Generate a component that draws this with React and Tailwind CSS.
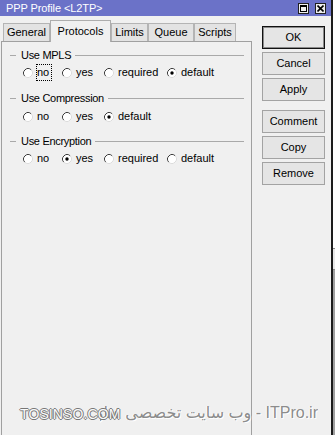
import React from 'react';

const Radio = ({ checked }) => (
  <svg width="10" height="10" viewBox="0 0 10 10" className="shrink-0">
    <circle cx="5" cy="5" r="4.5" fill="#fff" />
    <path d="M8.18 1.82 A4.5 4.5 0 0 0 1.82 8.18" fill="none" stroke="#3c3c3c" strokeWidth="1" />
    <path d="M8.18 1.82 A4.5 4.5 0 0 1 1.82 8.18" fill="none" stroke="#dcdcdc" strokeWidth="1" />
    {checked && <circle cx="5" cy="5" r="1.7" fill="#000" />}
  </svg>
);

const widths = { no: 'w-[39px]', yes: 'w-[42px]', required: 'w-[63px]', default: '' };

function RadioRow({ options, value, focus, className }) {
  return (
    <div className={`flex items-center h-[17px] pl-[21px] ${className}`}>
      {options.map((opt) => (
        <div key={opt} className={`flex items-center ${widths[opt]}`}>
          <Radio checked={opt === value} />
          <span
            className={`ml-[3px] pr-[2px] h-[17px] leading-[15px] border ${
              focus === opt ? 'border-dotted border-black' : 'border-transparent'
            }`}
          >
            {opt}
          </span>
        </div>
      ))}
    </div>
  );
}

function GroupHeader({ label, className }) {
  return (
    <div className={`flex items-center h-[14px] pl-[8px] pr-[7px] ${className}`}>
      <div className="w-[6px] border-t border-[#a9a9a9]" />
      <span className="ml-[5px] mr-[4px] whitespace-nowrap tracking-[-0.3px]">{label}</span>
      <div className="flex-1 border-t border-[#a9a9a9]" />
    </div>
  );
}

const tabs = [
  { label: 'General', w: 'w-[47px]' },
  { label: 'Protocols', w: 'w-[61px]', active: true },
  { label: 'Limits', w: 'w-[37px]' },
  { label: 'Queue', w: 'w-[46px]' },
  { label: 'Scripts', w: 'w-[42px]' },
];

function Btn({ children, primary, className = '' }) {
  return (
    <div
      className={`h-[23px] w-[63px] flex items-center justify-center bg-[#e5e5e5] border ${
        primary ? 'border-[#111] shadow-[inset_0_0_0_1px_#8a8a8a]' : 'border-[#a3a3a3]'
      } ${className}`}
    >
      {children}
    </div>
  );
}

export default function App() {
  return (
    <div className="w-[335px] h-[435px] flex overflow-hidden relative bg-white font-['Liberation_Sans',Arial,sans-serif] text-[11px] text-black">
      {/* window */}
      <div className="w-[333px] h-full flex flex-col bg-[#f0f0f0] border-r-2 border-[#1c1c1c]">
        {/* title bar */}
        <div className="h-[16px] shrink-0 bg-[#6b72c8] flex items-center pl-[6px] pr-[5px]">
          <span className="text-white text-[11px] leading-none tracking-[-0.1px]">PPP Profile &lt;L2TP&gt;</span>
          <div className="ml-auto flex gap-[6px]">
            <div className="w-[11px] h-[11px] bg-[#eeeeee] border border-[#202020] flex items-center justify-center">
              <svg width="7" height="7" viewBox="0 0 7 7">
                <rect x="0.5" y="0.5" width="6" height="6" fill="none" stroke="#000" />
                <line x1="0" y1="1.5" x2="7" y2="1.5" stroke="#000" />
              </svg>
            </div>
            <div className="w-[11px] h-[11px] bg-[#eeeeee] border border-[#202020] flex items-center justify-center">
              <svg width="7" height="7" viewBox="0 0 7 7">
                <path d="M0.5 0.5 L6.5 6.5 M6.5 0.5 L0.5 6.5" stroke="#000" strokeWidth="1.6" />
              </svg>
            </div>
          </div>
        </div>

        {/* body */}
        <div className="flex-1 flex pt-[4px]">
          {/* left: tabs + panel */}
          <div className="w-[252px] pl-[1px] flex flex-col">
            <div className="h-[21px] flex items-end pl-[2px]">
              {tabs.map((t) =>
                t.active ? (
                  <div
                    key={t.label}
                    className={`${t.w} h-[22px] -mb-px relative z-10 bg-[#f0f0f0] border border-b-0 border-[#adadad] flex items-center justify-center`}
                  >
                    {t.label}
                  </div>
                ) : (
                  <div
                    key={t.label}
                    className={`${t.w} h-[18px] bg-[#e3e3e3] border border-b-0 border-[#b4b4b4] flex items-center justify-center`}
                  >
                    {t.label}
                  </div>
                )
              )}
            </div>
            <div className="flex-1 w-[251px] border-t border-l border-r border-[#a0a0a0] bg-[#f0f0f0]">
              <GroupHeader label="Use MPLS" className="mt-[6px]" />
              <RadioRow options={['no', 'yes', 'required', 'default']} value="default" focus="no" className="mt-[2px]" />
              <GroupHeader label="Use Compression" className="mt-[10px]" />
              <RadioRow options={['no', 'yes', 'default']} value="default" className="mt-[3px]" />
              <GroupHeader label="Use Encryption" className="mt-[9px]" />
              <RadioRow options={['no', 'yes', 'required', 'default']} value="yes" className="mt-[2px]" />
            </div>
          </div>

          {/* right: buttons */}
          <div className="ml-[10px] mt-[6px] flex flex-col gap-[3px]">
            <Btn primary>OK</Btn>
            <Btn>Cancel</Btn>
            <Btn>Apply</Btn>
            <Btn className="mt-[6px]">Comment</Btn>
            <Btn>Copy</Btn>
            <Btn>Remove</Btn>
          </div>
        </div>
      </div>

      {/* neighbouring window edge */}
      <div className="w-[2px] h-full flex flex-col">
        <div className="h-[248px] bg-white" />
        <div className="h-[22px] bg-[#e8e8e8] border-t border-b border-[#888]" />
        <div className="flex-1 bg-[#a0a0a0]" />
      </div>

      {/* watermark */}
      <div
        dir="rtl"
        className="absolute left-[100px] top-[403px] w-[218px] overflow-hidden whitespace-nowrap text-right text-[16px] leading-[20px] text-[#8c8c8c] font-['Liberation_Sans','DejaVu_Sans',sans-serif] [text-shadow:1px_1px_0_#fff,-1px_0_0_#fff]"
      >
        ITPro.ir - وب سایت تخصصی فناوری اطلاعات
      </div>
      <div className="absolute left-[20px] top-[405px] text-[14px] leading-[18px] tracking-[0.1px] text-[#fafafa] font-['Liberation_Sans',sans-serif] [text-shadow:1px_0_0_#777,-1px_0_0_#777,0_1px_0_#777,0_-1px_0_#777]">
        TOSINSO.COM
      </div>
    </div>
  );
}
